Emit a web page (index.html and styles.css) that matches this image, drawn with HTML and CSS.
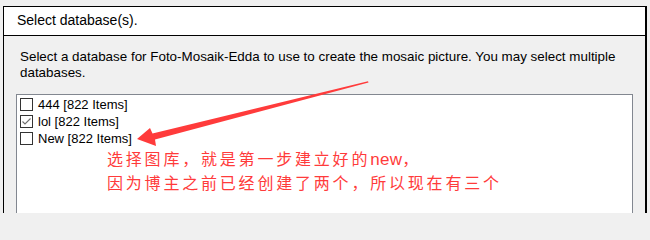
FILE: index.html
```html
<!DOCTYPE html>
<html>
<head>
<meta charset="utf-8">
<link rel="stylesheet" href="styles.css">
</head>
<body>
<div class="frame">
  <div class="header">Select database(s).</div>
  <div class="content">
    <p class="desc">Select a database for Foto-Mosaik-Edda to use to create the mosaic picture. You may select multiple databases.</p>
    <div class="list">
      <div class="row"><span class="box"></span><span class="label">444 [822 Items]</span></div>
      <div class="row"><span class="box"><svg viewBox="0 0 11 11" width="11" height="11"><path d="M1.5 5.5 L4 8 L9.5 2.5" fill="none" stroke="#6f6f6f" stroke-width="1.1"/></svg></span><span class="label">lol [822 Items]</span></div>
      <div class="row"><span class="box"></span><span class="label">New [822 Items]</span></div>
    </div>
  </div>
</div>
<svg class="arrow" width="650" height="213" viewBox="0 0 650 213">
  <polygon points="137,139 150,128 152.5,133.5 368,81.3 368.5,82.6 155,139.5 156,146" fill="#ff3b3b"/>
</svg>
<div class="note">
  <div>选择图库，就是第一步建立好的<span class="latin">new</span>，</div>
  <div>因为博主之前已经创建了两个，所以现在有三个</div>
</div>
</body>
</html>
```
FILE: styles.css
```css
html, body {
  margin: 0;
  padding: 0;
}
body {
  position: relative;
  box-sizing: border-box;
  width: 650px;
  height: 213px;
  padding: 6px 0 0 3px;
  overflow: hidden;
  background: #f0f0f0;
  font-family: "Liberation Sans", Arial, sans-serif;
  color: #000;
}
.frame {
  width: 641px;
  height: 207px;
  overflow: hidden;
  border-top: 1px solid #000;
  border-left: 1px solid #000;
  border-right: 2px solid #000;
  background: #f0f0f0;
}
.header {
  height: 29px;
  background: #fff;
  border-bottom: 1px solid #000;
  font-size: 14px;
  line-height: 16px;
  padding: 5px 0 0 13px;
  box-sizing: border-box;
}
.content {
  padding: 13px 12px 0 12px;
}
.desc {
  margin: 0 0 0 4px;
  font-size: 13.4px;
  line-height: 16px;
}
.list {
  margin-top: 13px;
  height: 140px;
  background: #fff;
  border: 1px solid #828790;
  padding-top: 1px;
}
.row {
  display: flex;
  align-items: center;
  height: 17px;
  padding-left: 3px;
  font-size: 13px;
  line-height: 17px;
}
.box {
  width: 11px;
  height: 11px;
  border: 1px solid #333;
  background: #fff;
  margin-right: 5px;
  display: flex;
}
.label {
  white-space: nowrap;
}
.arrow {
  position: absolute;
  left: 0;
  top: 0;
}
.note {
  position: absolute;
  left: 107px;
  top: 147px;
  font-family: "Noto Sans CJK SC", "Liberation Sans", sans-serif;
  font-size: 16px;
  line-height: 22px;
  letter-spacing: 2.8px;
  color: #ff3b3b;
  white-space: nowrap;
}
.latin {
  font-family: "Liberation Sans", Arial, sans-serif;
  font-size: 17px;
  letter-spacing: 0.3px;
}
```
